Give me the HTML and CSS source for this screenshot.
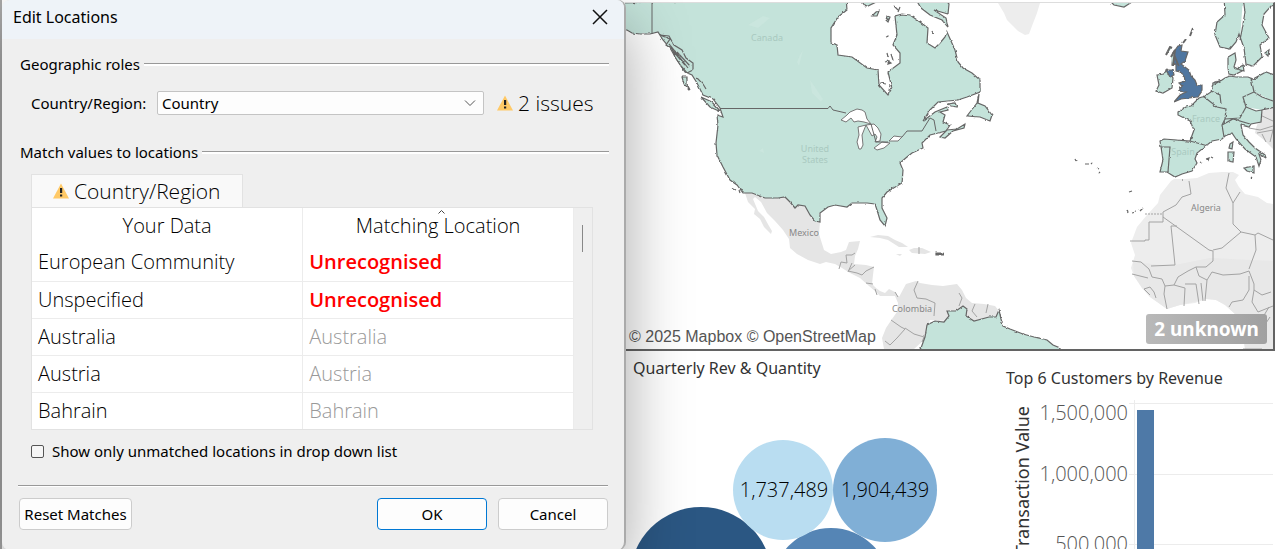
FILE: index.html
```html
<!DOCTYPE html>
<html lang="en">
<head>
<meta charset="utf-8">
<title>Edit Locations</title>
<link rel="stylesheet" href="styles.css">
</head>
<body>
<svg class="defs" aria-hidden="true">
  <symbol id="warn" viewBox="0 0 16 16"><path d="M8 .5 16 15.500H0z" fill="#ffc966"/><path d="M7 5h2.200v5H7zM7 11.500h2.200v2H7z" fill="#222"/></symbol>
</svg>
<div class="screen">
  <div class="overlay">
    <section class="dialog" role="dialog" aria-labelledby="dlg-title">
      <header class="titlebar">
        <h1 id="dlg-title">Edit Locations</h1>
        <button class="close" aria-label="Close"><svg viewBox="0 0 16 16"><path d="M1 1 15 15M15 1 1 15" stroke="#111" stroke-width="1.500" fill="none"/></svg></button>
      </header>
      <div class="content">
        <h2 class="legend">Geographic roles</h2>
        <div class="role">
          <label for="role">Country/Region:</label>
          <div class="pick">
            <select id="role"><option>Country</option></select>
            <svg viewBox="0 0 12 8"><path d="M1 1.500 6 6.500 11 1.500" stroke="#555" fill="none"/></svg>
          </div>
          <p class="issues"><svg class="warn"><use href="#warn"/></svg>2 issues</p>
        </div>
        <h2 class="legend second">Match values to locations</h2>
        <div class="match">
          <button class="tab"><svg class="warn"><use href="#warn"/></svg>Country/Region</button>
          <div class="list">
            <table>
              <thead><tr><th>Your Data</th><th><svg class="sort" viewBox="0 0 7 4"><path d="M.5 3.500 3.500.5 6.500 3.500" stroke="#444" fill="none"/></svg>Matching Location</th></tr></thead>
              <tbody>
                <tr><td>European Community</td><td class="bad">Unrecognised</td></tr>
                <tr><td>Unspecified</td><td class="bad">Unrecognised</td></tr>
                <tr><td>Australia</td><td class="ok">Australia</td></tr>
                <tr><td>Austria</td><td class="ok">Austria</td></tr>
                <tr><td>Bahrain</td><td class="ok">Bahrain</td></tr>
              </tbody>
            </table>
            <div class="scroll"><span></span></div>
          </div>
          <label class="only"><input type="checkbox">Show only unmatched locations in drop down list</label>
        </div>
        <footer class="actions">
          <button class="btn reset">Reset Matches</button>
          <button class="btn primary">OK</button>
          <button class="btn">Cancel</button>
        </footer>
      </div>
    </section>
  </div>
  <main class="dash">
    <section class="map">
      <svg viewBox="625 3 648 346" role="img" aria-label="Revenue map">
        <defs>
          <filter id="coast" x="0" y="0" width="1" height="1"><feTurbulence type="fractalNoise" baseFrequency=".22" numOctaves="2" seed="4"/><feDisplacementMap in="SourceGraphic" scale="2.500" xChannelSelector="R" yChannelSelector="G"/></filter>
        </defs>
        <rect x="625" y="3" width="648" height="346" fill="#fff"/>
        <g fill="#e5e5e5">
          <path d="M998 3 1004 13 1007 20 1013 26 1018 31 1025 35 1029 34 1032 26 1037 13 1040 3z" fill="#ededed"/>
          <path d="M745 193 752 193 765 198 778 198 785 197 790 202 795 208 798 205 805 206 810 215 815 221 820 222 819 234 824 250 831 254 841 252 846 250 849 242 860 241 858 249 855 256 854 264 866 265 874 267 873 275 872 284 876 288 880 291 885 293 889 289 895 292 899 297 906 284 916 281 920 283 932 285 943 286 957 284 962 290 966 298 972 303 984 304 995 306 1000 312 996 320 970 322 930 320 924 340 914 349H884L882 338 886 328 892 319 897 312 898 303 895 296 889 296 880 296 876 292 869 286 860 278 850 273 842 268 835 264 826 262 820 264 808 260 797 254 790 248 789 239 783 230 775 221 767 213 761 202 755 197 753 199 758 211 764 217 769 226 772 231 771 234 764 227 760 219 754 214 755 209 748 202z"/>
          <path d="M870 237 878 235 888 236 895 240 902 243 908 247 899 247 888 240 880 238zM896 254 902 254 900 256zM909 250 914 248 922 248 931 252 925 254 912 253z"/>
          <path d="M1174 179 1185 179 1197 178 1209 173 1222 172 1233 172 1239 175 1235 180 1239 187 1245 194 1258 197 1267 203 1273 204V349H1245L1242 330 1235 314 1225 305 1216 300 1206 299 1195 303 1180 305 1167 309 1150 297 1142 288 1134 276 1131 268 1135 255 1131 243 1137 227 1147 215 1158 203 1160 195 1171 181z" fill="#ededed"/>
          <path d="M1133 262 1170 266 1210 258 1273 261V349H1245L1242 330 1235 314 1225 305 1216 300 1206 299 1180 305 1167 309 1150 297 1142 288 1134 276z" opacity=".6"/>
          <path d="M1256 128 1262 112 1273 105V149L1264 140 1255 133z"/>
        </g>
        <g fill="none" stroke="#a3a3a3">
          <path d="M846 255 852 255 855 253M846 255 847 263 841 262 839 269M852 263 848 272M855 265 848 271 857 273 862 275 866 271 874 267M866 283 873 284M875 289 877 295M895 292 898 297M919 247 919 254M918 281 914 290 917 298 926 299 935 303 934 316M959 293 962 298 959 306M975 304 972 311 977 317M988 304 986 313M891 320 901 327 905 329 897 338 890 345 885 341M905 328 914 334 924 337 922 342"/>
          <path d="M1189 181 1191 194 1182 197 1176 205 1163 212V222H1149V240H1145V241H1130M1163 217 1209 250 1213 251V261L1206 267 1196 267M1171 226 1177 226M1171 226 1175 265 1151 266M1213 250 1222 248 1241 232 1255 235 1256 250 1249 269M1241 232 1233 224 1233 203 1226 188 1229 173M1233 203 1240 192M1255 235 1258 233 1273 240M1132 261 1141 262 1149 269 1152 277 1162 279 1165 286 1164 294 1167 309M1132 274 1148 278M1150 295 1144 289 1150 287 1154 292 1156 298M1165 286 1174 285 1178 277 1188 271 1196 267 1199 276 1207 280 1205 301M1174 285 1185 288 1184 306M1185 284 1196 284 1199 304M1201 283 1203 301M1207 280 1212 272 1223 275 1240 274 1249 271 1254 284 1254 290 1262 295 1271 292M1249 276 1249 290 1243 300 1232 302 1229 307M1254 290 1252 302 1258 312 1273 306M1233 317 1263 317 1269 307M1250 317V329H1262L1270 317M1243 349H1262"/>
          <path d="M1145 214H1162" stroke-dasharray="2 1"/>
          <path d="M1249 128 1260 130 1273 126M1260 115 1273 121M1257 133 1273 130 1270 142M1262 134 1266 142" />
        </g>
        <g filter="url(#coast)" fill="#c4e3da" stroke="#666" stroke-width="1.200">
          <path d="M620 3V30L627 30 632 33 640 34 650 34 658 32 663 40 670 48 677 60 685 72 692 75 697 83 703 95 713 99 720 108 723 117 717 115 718 125 716 143 717 155 723 167 730 180 737 185 743 193 752 193 765 198 778 198 785 197 790 202 795 208 798 205 805 206 810 215 815 221 820 222 820 213 828 207 835 205 847 207 852 203 867 203 875 204 877 210 880 220 885 226 887 218 882 208 882 198 887 192 902 183 903 170 900 163 907 157 912 153 923 148 922 143 930 135 938 133 946 131 950 125 943 122 945 115 940 112 948 110 947 107 935 112 923 121 930 110 938 102 958 100 967 97 980 92 980 80 972 73 963 68 958 62 955 50 947 32 945 37 940 43 935 48 927 43 928 28 920 22 910 15 902 14 895 16 897 35 893 45 900 53 900 63 888 72 892 88 888 95 879 85 878 70 867 68 852 57 838 55 837 45 831 43 831 28 838 17 847 10 846 -3z"/>
          <path d="M979 94 977 103 970 112 967 116 980 117 990 121 992 115 985 106 978 103zM940 137 947 130 957 129 965 124 964 128 953 131 945 138zM948 104 955 103 957 107 951 106zM682 77 687 77 687 84 690 90 684 84zM701 97 712 102 721 112 710 107z"/>
          <path d="M915 -2 921 8 930 15 942 20 948 27 946 18 934 10 948 14 949 4 944 -2zM872 16 876 12 879 11 877 16zM887 16 890 17 888 22 886 20zM894 6 898 10M900 7 898 12M886 37 889 36M932 31 933 33M859 -2 866 7 874 3z"/>
          <path d="M660 35 669 36 674 45 682 50 686 58 693 63 693 70 687 73 681 66 675 57 672 49 666 45 670 39zM669 44 678 55 688 68M673 51 685 65M677 52 690 66M697 78 703 84 706 89M885 62 889 61 888 64 891 63 887 60M891 54 893 60M887 53 888 57M880 83 886 84M889 91 890 85"/>
          <path d="M921 348 925 337 927 325 935 321 944 322 949 316 947 311 956 311 963 306 967 309 966 316 974 321 989 317 996 317 999 310 1001 319 1003 326 1010 329 1023 334 1034 337 1047 340 1053 345 1060 348V355H915z"/>
          <path d="M1107 -2 1114 5 1124 7 1132 2 1132 -4zM1224 -4 1225 15 1217 22 1215 35 1220 47 1230 49 1236 42 1239 34 1244 48 1246 64 1253 66 1262 57 1260 45 1269 38 1262 25 1264 14 1271 6 1280 4V-4zM1243 -3 1245 12 1242 30 1240 40M1228 68 1228 57 1235 53 1236 60 1234 67 1242 71 1234 75 1229 74zM1237 69 1243 65 1244 71zM1265 53 1269 50 1268 56z"/>
          <path d="M1178 112 1186 107 1191 106 1199 98 1205 96 1211 92 1213 83 1222 80 1225 78 1230 76 1236 77 1248 77 1253 79 1266 72 1280 77V106L1262 110 1261 122 1251 124 1249 127 1241 125 1243 135 1249 142 1255 148 1265 155 1266 158 1259 154 1261 160 1259 166 1256 157 1245 149 1236 139 1232 133 1225 136 1222 139 1212 141 1207 145 1197 153 1195 159 1197 163 1192 171 1182 174 1175 177 1167 172 1160 172 1163 160 1161 147 1160 141 1164 139 1190 141 1194 130 1190 121 1178 115zM1161 147 1170 147 1168 172M1190 141 1208 146M1203 96 1217 107 1226 109 1225 119 1222 125 1224 137M1211 91 1220 95 1221 104M1213 85 1222 80M1251 78 1254 92 1243 97 1246 107 1240 118 1225 119M1254 92 1262 97 1273 101M1246 107 1256 111 1262 110M1222 125 1233 119 1250 124M1244 168 1254 166 1254 173 1247 171zM1228 152 1234 152 1233 162 1228 161zM1230 144 1233 142 1232 149 1229 148z"/>
          <path d="M1157 75 1164 74 1167 69 1173 78 1172 88 1163 93 1156 91 1159 85z"/>
          <path d="M936 253H943V255H936zM1200 162 1202 163M1206 159 1209 158 1208 161M1211 157 1213 158M1251 177 1252 178M1182 180 1183 180M1075 159 1076 161M1085 164 1089 164M1091 163 1092 164M1097 168 1099 169M1099 172 1100 173M1127 210 1128 213M1132 212 1136 211M1140 211 1143 208M1129 192 1132 191M732 188 736 190M739 190 740 193" fill="#666"/>
          <path d="M1178 46 1182 45 1181 51 1188 52 1185 61 1181 64 1189 70 1191 76 1195 80 1197 85 1202 85 1202 91 1198 97 1189 98 1181 99 1174 102 1180 95 1186 92 1179 91 1182 86 1179 83 1185 81 1184 75 1180 72 1176 71 1176 64 1172 65 1173 53zM1166 70 1173 70 1174 75 1170 77z" fill="#4f76a0"/>
          <path d="M1166 55 1170 47 1172 48M1171 57 1175 50 1173 66M1183 43 1186 39M1190 36 1193 28M1173 52 1179 67" stroke-width="2"/>
        </g>
        <g fill="#fff" stroke="#777">
          <path d="M841 120 847 115 850 112 857 109 862 110 865 112 867 119 871 124 864 122 858 121 854 122 851 118 846 122zM858 127 866 125 864 130 862 135 863 145 861 149 859 149 857 142 859 135zM866 125 874 124 878 128 881 134 880 141 875 142 877 137 875 134 872 136zM874 148 882 142 890 143 884 148 877 150zM889 141 894 136 902 137 898 141z"/>
        </g>
        <g fill="none" stroke="#666"><path d="M652 3V34M720 108.500H828L830 106 833 110 846 113M871 124 876 142 888 142M902 137 907 131H922L930 118 934 120 936 131"/></g>
        <g fill="#d0eae2" opacity=".5"><path d="M748 25 763 16 770 18 758 28zM800 55 803 50 799 66 797 62zM810 80 815 87 823 99 821 102 812 93zM759 151 763 148 764 153z"/></g>
        <g class="places">
          <text x="767" y="41" fill="#a9c9c0">Canada</text>
          <text x="815" y="152" fill="#a9c9c0">United</text><text x="815" y="163" fill="#a9c9c0">States</text>
          <text x="1206" y="122" fill="#a9c9c0">France</text><text x="1183" y="155" fill="#a9c9c0">Spain</text>
          <text x="804" y="236">Mexico</text><text x="912" y="312">Colombia</text><text x="1206" y="211">Algeria</text>
        </g>
      </svg>
      <p class="credit">© 2025 Mapbox © OpenStreetMap</p>
      <button class="unknown">2 unknown</button>
    </section>
    <div class="charts">
      <section class="bubbles">
        <h2>Quarterly Rev &amp; Quantity</h2>
        <svg viewBox="625 390 375 160" role="img" aria-label="Quarterly bubbles">
          <circle cx="701" cy="578" r="71" fill="#2b5783"/>
          <circle cx="831" cy="587" r="59" fill="#5585b5"/>
          <circle cx="783" cy="490" r="50" fill="#b9ddf1"/>
          <circle cx="885" cy="490" r="52" fill="#80afd6"/>
          <text x="784" y="497">1,737,489</text><text x="885" y="497">1,904,439</text>
        </svg>
      </section>
      <section class="bars">
        <h2>Top 6 Customers by Revenue</h2>
        <svg viewBox="1000 400 275 150" role="img" aria-label="Top customers">
          <path d="M1129 403.500H1273M1129 474.500H1273M1129 544.500H1273M1134.500 400V550" stroke="#ececec" fill="none"/>
          <rect x="1137" y="410" width="17" height="140" fill="#4e79a7"/>
          <text x="1128" y="420">1,500,000</text><text x="1128" y="481">1,000,000</text><text x="1128" y="551">500,000</text>
          <text class="axis" transform="translate(1029 406) rotate(-90)">Transaction Value</text>
        </svg>
      </section>
    </div>
  </main>
</div>
</body>
</html>
```
FILE: styles.css
```css
* { box-sizing: border-box; }
body, h1, h2, p { margin: 0; font-weight: 400; }
body { background: #fff; color: #000; font-family: "Noto Sans", sans-serif; }
button, select, input { font: inherit; color: inherit; margin: 0; }
svg { display: block; }
.defs { position: absolute; width: 0; height: 0; }
.screen { display: grid; grid-template-columns: 625px minmax(0, 1fr); height: 100vh; overflow: hidden; }
.overlay { position: relative; z-index: 1; padding-left: 2px; background: linear-gradient(90deg, #a9a9a9 2px, transparent 2px); }
.dialog { height: 100%; background: #efefef; border-right: 1px solid #aaa; border-radius: 8px; overflow: hidden; box-shadow: 1px 0 0 #aaa, 0 24px 64px rgba(0, 0, 0, .36); font-family: "Noto Sans", sans-serif; font-size: 15px; line-height: 20px; }
.titlebar { display: flex; align-items: center; justify-content: space-between; height: 39px; padding: 0 16px 6px 11px; background: #eef3f8; }
.titlebar h1 { font-size: 16px; }
.close { padding: 0; border: 0; background: none; }
.close svg { width: 16px; height: 16px; }
.content { padding: 15px 15px 0 18px; }
.legend { display: flex; align-items: center; gap: 4px; font-size: 15px; line-height: 20px; }
.legend::after { content: ""; flex: 1; height: 2px; border-top: 1px solid #999; background: #fff; }
.second { margin-top: 25px; }
.role { display: flex; align-items: center; height: 28px; margin-top: 15px; padding-left: 11px; }
.role label { width: 126px; white-space: nowrap; }
.pick { position: relative; flex: 1; max-width: 327px; }
.pick select { width: 100%; height: 24px; padding: 0 4px; border: 1px solid #c4c4c4; border-radius: 2px; background: #fdfdfd; appearance: none; line-height: 20px; }
.pick svg { position: absolute; right: 8px; top: 8px; width: 12px; height: 8px; pointer-events: none; }
.issues { display: flex; align-items: center; gap: 5px; margin-left: 13px; font: 300 21px/28px "Open Sans", sans-serif; white-space: nowrap; }
.warn { width: 16px; height: 16px; }
.match { margin: 12px 16px 0 11px; }
.tab { display: flex; align-items: center; gap: 5px; height: 33px; padding: 0 21px; border: 1px solid #e2e2e2; border-bottom: 0; background: #f9f9f9; font: 300 21px/28px "Open Sans", sans-serif; }
.list { display: flex; border: 1px solid #e2e2e2; background: #fff; font: 300 20px/28px "Open Sans", sans-serif; }
table { flex: 1; width: 100%; border-collapse: collapse; table-layout: fixed; }
th, td { height: 37px; padding: 0 6px; border-right: 1px solid #ececec; text-align: left; font-weight: 300; }
td { border-bottom: 1px solid #ececec; }
tbody tr:last-child td { border-bottom: 0; }
th { position: relative; height: 36px; text-align: center; }
.sort { position: absolute; top: 2px; left: 50%; width: 7px; height: 4px; }
td.bad { color: #f00; font-weight: 600; }
td.ok { color: #999; }
.scroll { flex: none; width: 18px; padding: 17px 0 0 8px; background: #efefef; }
.scroll span { display: block; width: 1px; height: 27px; background: #888; }
.only { display: flex; align-items: center; gap: 8px; margin-top: 11px; }
.only input { appearance: none; width: 13px; height: 13px; border: 1px solid #555; border-radius: 2px; background: #f6f6f6; }
.actions { display: flex; gap: 11px; margin: 24px 1px 0 -2px; padding: 12px 0 0 1px; border-top: 1px solid #999; box-shadow: inset 0 1px #fff; }
.btn { width: 110px; height: 32px; padding: 0; border: 1px solid #ccc; border-radius: 4px; background: #fdfdfd; white-space: nowrap; }
.reset { width: 113px; margin-right: auto; }
.primary { border-color: #0078d4; }
.dash { padding: 2px 6px 0 0; }
.map { position: relative; border: solid #636363; border-width: 0 2px 2px 0; border-top: 1px solid #ddd; }
.map > svg, .charts svg { width: 100%; height: auto; }
.places { font: 9px "Noto Sans", sans-serif; text-anchor: middle; fill: #888; }
.credit { position: absolute; left: 0; bottom: 1px; padding: 0 4px; background: rgba(255, 255, 255, .6); color: #555; font: 16px/22px "Liberation Sans", Arial, sans-serif; }
.unknown { position: absolute; right: 6px; bottom: 5px; width: 121px; height: 30px; padding: 0; border: 0; border-radius: 3px; background: linear-gradient(90deg, #b9b9b9, #a0a0a0); color: #fff; font: 700 19px/30px "Noto Sans", sans-serif; }
.charts { display: grid; grid-template-columns: 375fr 275fr; }
.charts h2 { color: #333; font: 16px/20px "Noto Sans", sans-serif; white-space: nowrap; }
.bubbles h2 { padding: 7px 8px 12px; }
.bars h2 { padding: 17px 6px 12px; }
.bubbles text { font: 300 20px "Open Sans", sans-serif; text-anchor: middle; }
.bars text { font: 300 20px "Open Sans", sans-serif; text-anchor: end; fill: #555; }
.bars .axis { font: 18px "Noto Sans", sans-serif; fill: #333; }
```
